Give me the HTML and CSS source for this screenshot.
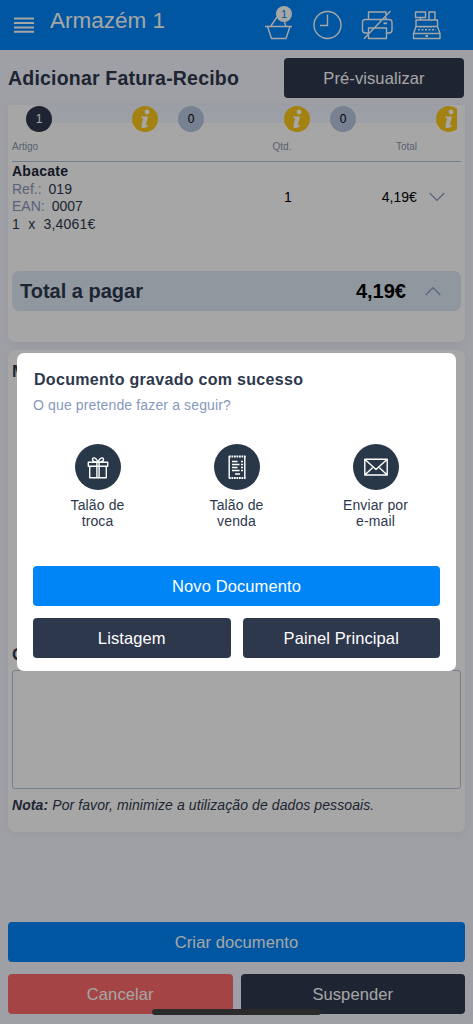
FILE: index.html
```html
<!DOCTYPE html>
<html lang="pt">
<head>
<meta charset="utf-8">
<title>Adicionar Fatura-Recibo</title>
<link rel="stylesheet" href="styles.css">
</head>
<body>
<div class="app">
  <header class="topbar">
    <svg class="menu" width="20" height="16" viewBox="0 0 20 16"><path d="M0 1.600h20M0 6h20M0 10.400h20M0 14.800h20" stroke="#fff" stroke-width="2"/></svg>
    <span class="store">Armazém 1</span>
    <nav class="tools">
      <span class="basket">
        <svg width="30" height="40" viewBox="0 0 30 40"><path d="M1 22.500h27M3.500 22.500l4 12h14.500l4-12M6.500 22.500l6.500-9.500M22 22.500l-2-6"/></svg>
        <span class="badge">1</span>
      </span>
      <svg width="30" height="40" viewBox="0 0 30 40"><circle cx="15.500" cy="21" r="13.500"/><path d="M15.500 10.500V21.500H8"/></svg>
      <svg width="34" height="40" viewBox="0 0 34 40"><path d="M8.500 15.500V8h17.500v7.500M8 29H5.500a3 3 0 0 1-3-3v-7.500a3 3 0 0 1 3-3h23.500a3 3 0 0 1 3 3V26a3 3 0 0 1-3 3h-2.500M8.500 24h18v10.500h-18zM4 34.800L30.500 7"/><path d="M23.500 19.300h3.500" stroke-width="1.800"/></svg>
      <svg width="30" height="40" viewBox="0 0 30 40"><path d="M3.500 8h10v5.500h-10zM17 16V8h6v8M8.500 13.500V16M4 22.500v-6.500h21.500v6.500M1.500 34.500v-5l2.500-7h21.500l2.500 7v5zM1.500 29.500h26.500"/><path d="M7.500 22.800h15M6 25.800h18" stroke-dasharray="2 1.500"/><path d="M13.500 32h2.500" stroke-width="2"/></svg>
    </nav>
  </header>

  <section class="heading">
    <h1>Adicionar Fatura-Recibo</h1>
    <button class="btn dark preview">Pré-visualizar</button>
  </section>

  <section class="card lines">
    <div class="steps">
      <span class="step active">1</span>
      <span class="step info"><svg viewBox="0 0 26 26"><circle cx="15" cy="6" r="2.400"/><path d="M9.200 10.500h6.800l-2 8q-.3 1.500 1.300.8l1-.5-.4 1.500q-2 1.800-4.200 1.800-2.900 0-2.200-3.200l1.500-6q.3-1.200-.8-1.200h-1.200z"/></svg></span>
      <span class="step">0</span>
      <span class="step info"><svg viewBox="0 0 26 26"><circle cx="15" cy="6" r="2.400"/><path d="M9.200 10.500h6.800l-2 8q-.3 1.500 1.300.8l1-.5-.4 1.500q-2 1.800-4.200 1.800-2.900 0-2.200-3.200l1.500-6q.3-1.200-.8-1.200h-1.200z"/></svg></span>
      <span class="step">0</span>
      <span class="step info"><svg viewBox="0 0 26 26"><circle cx="15" cy="6" r="2.400"/><path d="M9.200 10.500h6.800l-2 8q-.3 1.500 1.300.8l1-.5-.4 1.500q-2 1.800-4.200 1.800-2.900 0-2.200-3.200l1.500-6q.3-1.200-.8-1.200h-1.200z"/></svg></span>
    </div>
    <div class="columns"><span>Artigo</span><span class="qty">Qtd.</span><span class="sum">Total</span></div>
    <div class="item">
      <div class="product">
        <strong>Abacate</strong>
        <span><em>Ref.:</em>019</span>
        <span><em>EAN:</em>0007</span>
        <span class="price">1 &nbsp;x &nbsp;3,4061€</span>
      </div>
      <span class="qty">1</span>
      <span class="sum">4,19€</span>
      <svg class="chev" width="16" height="10" viewBox="0 0 16 10"><path d="M.7 1L8 8.500 15.300 1" fill="none" stroke="#8599b8" stroke-width="1.200"/></svg>
    </div>
    <div class="total">
      <span class="total-label">Total a pagar</span>
      <span class="total-value">4,19€</span>
      <svg width="16" height="10" viewBox="0 0 16 10"><path d="M.7 9L8 1.500 15.300 9" fill="none" stroke="#8599b8" stroke-width="1.200"/></svg>
    </div>
  </section>

  <section class="card details">
    <h2>M</h2>
    <h2 class="notes-title">O</h2>
    <div class="textarea"></div>
    <p class="note"><b>Nota:</b> Por favor, minimize a utilização de dados pessoais.</p>
  </section>

  <footer class="actions">
    <button class="btn blue">Criar documento</button>
    <div class="pair"><button class="btn red">Cancelar</button><button class="btn dark">Suspender</button></div>
  </footer>
</div>

<div class="overlay">
  <div class="modal">
    <h3>Documento gravado com sucesso</h3>
    <p class="question">O que pretende fazer a seguir?</p>
    <div class="choices">
      <div class="choice">
        <svg width="46" height="46" viewBox="0 0 46 46"><circle cx="23" cy="23" r="23"/><path d="M13.300 18.300h19.400v4h-19.400zM14.700 22.300h16.600v11.400H14.700zM21.900 18.300v15.400M24.100 18.300v15.400M23 18c-2-5-5.500-5-5.500-2.500 0 2 3 2.500 5.500 2.500zM23 18c2-5 5.500-5 5.500-2.500 0 2-3 2.500-5.500 2.500z"/></svg>
        <span>Talão de<br>troca</span>
      </div>
      <div class="choice">
        <svg width="46" height="46" viewBox="0 0 46 46"><circle cx="23" cy="23" r="23"/><path d="M15.200 12v22.500M30.800 12v22.500"/><path d="M15 12.500h16.500M15 34h16.500" stroke-width="2" stroke-dasharray="1.800 .7"/><path d="M18 17.500h5.500M18 20.500h7.500M18 23.500h5.500M18 26.500h7.500M21 30h5M27 17.500h2M27 20.500h2M27 23.500h2M27 26.500h2" stroke-width="1.500"/></svg>
        <span>Talão de<br>venda</span>
      </div>
      <div class="choice">
        <svg width="46" height="46" viewBox="0 0 46 46"><circle cx="23" cy="23" r="23"/><path d="M11.800 15.300h22.400v15.700H11.800zM11.800 15.300L23 25.500 34.200 15.300M11.800 31l8.500-8M34.200 31l-8.500-8"/></svg>
        <span>Enviar por<br>e-mail</span>
      </div>
    </div>
    <button class="btn blue">Novo Documento</button>
    <div class="pair"><button class="btn dark">Listagem</button><button class="btn dark">Painel Principal</button></div>
  </div>
  <span class="home-indicator"></span>
</div>
</body>
</html>
```
FILE: styles.css
```css
* { box-sizing: border-box; }
body { margin: 0; font-family: "Liberation Sans", Arial, sans-serif; color: #2e384d; }
h1, h2, h3, p { margin: 0; }
.app { width: 473px; height: 1024px; background: #f4f6fd; overflow: hidden; display: flex; flex-direction: column; }
.topbar { height: 50px; flex: none; background: #0085f7; color: #fff; display: flex; align-items: flex-start; padding-left: 14px; }
.menu { margin-top: 17px; }
.store { font-size: 22.500px; line-height: 26px; margin: 8px 0 0 16px; letter-spacing: 0; }
.tools { margin: 4px 31px 0 auto; display: flex; gap: 18px; }
.tools svg { display: block; fill: none; stroke: #fff; stroke-width: 1.400; stroke-linejoin: round; }
.basket { position: relative; }
.badge { position: absolute; left: 12px; top: 2px; width: 16px; height: 16px; border-radius: 50%; background: #fff; color: #0085f7; font-size: 11px; line-height: 16px; text-align: center; }
.heading { height: 55px; flex: none; display: flex; justify-content: space-between; padding: 8px 9px 0 8px; }
h1 { font-size: 19.500px; line-height: 40px; letter-spacing: .2px; }
.btn { border: 0; border-radius: 4px; height: 40px; padding: 1px 0 0; color: #fff; font: 16.500px/39px "Liberation Sans", Arial, sans-serif; letter-spacing: .1px; }
.dark { background: #2e384d; }
.blue { background: #0085f7; }
.red { background: #fc696a; }
.preview { width: 180px; }
.card { background: #fff; margin: 0 8px; padding: 0 4px; flex: none; border-radius: 7px; box-shadow: 0 2px 8px rgba(46,56,77,.07); }
.lines { height: 237px; border-top-left-radius: 0; border-top-right-radius: 0; }
.steps { height: 27px; margin-right: 4px; padding: .5px 0 0 14px; display: flex; overflow: hidden; background: linear-gradient(#f0f4ff, #f0f4ff) 27px 0 / 408px 18px no-repeat; }
.step { flex: none; width: 26px; height: 26px; margin-right: 20.500px; border-radius: 50%; background: #b8c7e0; color: #000; font-size: 12px; line-height: 27px; text-align: center; }
.step.active { background: #2e384d; color: #fff; margin-right: 79.500px; }
.step.info { background: #fbc81b; }
.step:nth-child(3), .step:nth-child(5) { margin-right: 79.500px; }
.step svg { display: block; fill: #fff; }
.columns { height: 30px; border-bottom: 1px solid #b1c1dd; display: grid; grid-template-columns: 249px 61px 95px; color: #8798ad; font-size: 10px; line-height: 29px; }
.columns .qty { text-align: center; width: 42px; }
.columns .sum { text-align: right; }
.item { height: 109px; display: flex; align-items: flex-start; color: #000; font-size: 14px; }
.product { width: 272px; display: flex; flex-direction: column; line-height: 17.600px; padding-top: 1px; color: #2e384d; }
.product strong { color: #1c2438; letter-spacing: .25px; }
.product em { font-style: normal; color: #8798bd; margin-right: 7px; }
.product .price { letter-spacing: .2px; }
.item .qty, .item .sum { line-height: 16px; padding-top: 27px; }
.item .sum { width: 125px; text-align: right; }
.chev { margin: 30px 0 0 12px; }
.total { height: 40px; border-radius: 7px; background: #dfe9f5; display: flex; align-items: center; padding: 0 20px 0 8px; font-weight: bold; font-size: 20px; }
.total-value { margin-left: auto; margin-right: 19px; color: #000; }
.details { height: 482px; margin-top: 8px; padding-top: 12px; }
h2 { font-size: 17px; line-height: 20px; }
.notes-title { margin-top: 263px; }
.textarea { height: 119px; margin-top: 5px; border: 1px solid #b8c3dc; border-radius: 3px; }
.note { font-size: 14px; line-height: 20px; margin-top: 6px; font-style: italic; letter-spacing: .09px; }
.actions { margin-top: auto; padding: 0 8px 10px; display: grid; gap: 12px; }
.actions .pair { display: grid; grid-template-columns: 1fr 1fr; gap: 8px; }
.overlay { position: fixed; inset: 0; background: rgba(0,0,0,.35); }
.modal { position: absolute; left: 17px; top: 353px; width: 439px; height: 318px; border-radius: 7px; background: #fff; padding: 16px 16px 0; }
h3 { font-size: 16px; line-height: 22px; letter-spacing: .3px; padding-left: 1px; }
.question { font-size: 14px; line-height: 20px; color: #8798bd; margin-top: 4px; letter-spacing: .14px; }
.choices { display: grid; grid-template-columns: repeat(3, 139px); margin: 29px 0 0 -5px; height: 122px; }
.choice { display: flex; flex-direction: column; align-items: center; text-align: center; font-size: 14px; line-height: 16.500px; gap: 6.500px; letter-spacing: .12px; }
.choice svg { fill: none; stroke: #fff; stroke-width: 1.400; stroke-linejoin: round; }
.choice circle { fill: #293849; stroke: none; }
.modal .btn { width: 100%; }
.modal .blue { display: block; }
.modal .pair { display: grid; grid-template-columns: 1fr 1fr; gap: 12px; margin-top: 12px; }
.home-indicator { position: absolute; left: 152px; bottom: 9px; width: 169px; height: 6px; border-radius: 3px; background: #2b2b2b; }
```
